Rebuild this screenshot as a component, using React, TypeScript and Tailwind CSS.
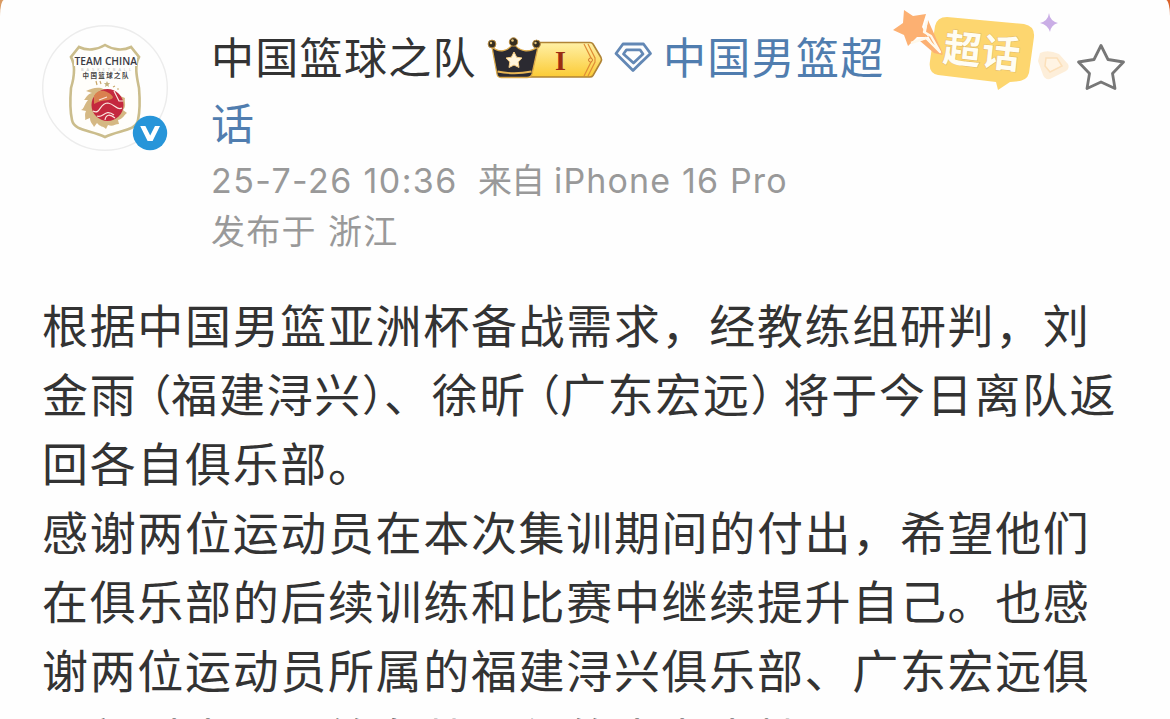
import clsx from "clsx";

const blockLines = [
    "回各自俱乐部。",
    "感谢两位运动员在本次集训期间的付出，希望他们",
    "在俱乐部的后续训练和比赛中继续提升自己。也感",
    "谢两位运动员所属的福建浔兴俱乐部、广东宏远俱",
    "乐部对中国男篮备战工作的大力支持",
];

function Avatar() {
    return (
        <div className="relative size-[126px] shrink-0">
            <svg viewBox="42 25 126 126" className="size-full">
                <circle cx="105" cy="88" r="62.3" fill="#fefefe" stroke="#ececec" strokeWidth="1.4" />
                <path
                    d="M79 47 C87 51 97 50 105 45 C113 50 123 51 131 47 L139 57 C134 66 137 78 139 88 C140 100 140 111 138 120 C136 131 119 130 105 137 C91 130 74 131 72 120 C70 111 70 100 71 88 C74 78 76 66 71 57 Z"
                    fill="#fffefb"
                    stroke="#cbbd8c"
                    strokeWidth="2.6"
                />
                <rect x="74" y="57" width="63" height="9" fill="#fefefe" />
                <text x="74.5" y="65" textLength="62.5" lengthAdjust="spacingAndGlyphs" className="font-['Open_Sans'] text-[11px] font-semibold" fill="#3a3a42">TEAM CHINA</text>
                <text x="81" y="70.5" textLength="50" className="font-['Open_Sans'] text-[4px]" fill="#bdbdbd">BASKETBALL</text>
                <text x="82.5" y="78" textLength="46" className="font-['Noto_Sans_CJK_SC'] text-[6.5px] font-bold" fill="#444">中国篮球之队</text>
                <path d="M107 81 l.9 2 2.2 .2 -1.7 1.5 .6 2.2 -2 -1.2 -2 1.2 .6 -2.2 -1.7 -1.5 2.2 -.2Z" fill="#c4b27e" />
                <path d="M113 87 l2 -1 M117 89 l2 0 M97 85 l-1 -4 M101 84 l-1 -3" stroke="#c9a76a" strokeWidth="1.2" />
                <path
                    d="M101 88 C95 87 91 89 86 91 L92 93 C87 94 86 98 84 100 L88 100 C84 105 84 109 81 110 L86 111 C84 115 86 118 85 120 L90 118 C90 123 93 124 94 127 L97 123 C100 127 103 126 106 129 L108 125 C113 127 115 124 119 124 L118 120 C123 119 124 115 127 113 L123 110 C127 106 124 102 125 98 L120 96 Z"
                    fill="#d5b883"
                />
                <circle cx="107.5" cy="105" r="16" fill="#c4283e" />
                <path d="M94 96 C98 88 108 90 113 97 C112 102 104 98 94 104 Z" fill="#d9804f" />
                <path d="M93 111 C101 115 99 103 108 103 C115 104 117 111 122 108 M97 116 C103 119 105 108 114 115 M114 91 L119 101 L123 101 M105 120 C106 114 110 114 115 118 M99 100 L107 97" fill="none" stroke="#fae7df" strokeWidth="1.2" />
            </svg>
            <svg viewBox="0 0 36 36" className="absolute left-[90px] top-[90px] size-9">
                <circle cx="18" cy="18" r="17.2" fill="#2795d9" />
                <path d="M8.2 11 h5.2 l4.8 9.6 4.8 -9.6 h5 l-7.4 15 h-5Z" fill="#fff" />
            </svg>
        </div>
    );
}

function VipBadge() {
    return (
        <svg viewBox="486 35 118 46" className="h-[46px] w-[118px] shrink-0">
            <defs>
                <linearGradient id="gold" x1="0" y1="0" x2="0" y2="1">
                    <stop offset="0" stopColor="#fff0a6" />
                    <stop offset="1" stopColor="#fbcb35" />
                </linearGradient>
            </defs>
            <path d="M537 41.5 H590 Q592 41.5 593 43 L601 56.5 Q602 58.5 601 60.5 L593 74.5 Q592 76 590 76 H530Z" fill="url(#gold)" stroke="#b08436" strokeWidth="1.6" />
            <path d="M584 43 L591 57 L591 61 L584 75 M588 43 L595 57 L595 61 L588 75" fill="none" stroke="#df8d36" strokeWidth="1.2" />
            <circle cx="590.5" cy="59" r="2" fill="#fbd96b" stroke="#d47831" />
            <path d="M492 46 C499 52 508 51 513.5 42 C519 51 529 52 538 46 L532 73 Q531 76.5 527 76.5 H501 Q497.5 76.5 497 73 Z" fill="#2b2a31" stroke="#dba948" strokeWidth="1.3" />
            <path d="M497.5 70.5 Q514 74 531.5 70.5" fill="none" stroke="#e8b654" strokeWidth="1.8" />
            <circle cx="492" cy="43" r="3.9" fill="#352d20" stroke="#b88b3e" />
            <circle cx="513.5" cy="41" r="4.2" fill="#352d20" stroke="#b88b3e" />
            <circle cx="536.5" cy="43" r="3.9" fill="#352d20" stroke="#b88b3e" />
            <circle cx="491" cy="42" r="1.2" fill="#e8c67a" />
            <circle cx="512.5" cy="39.5" r="1.3" fill="#e8c67a" />
            <circle cx="535.5" cy="42" r="1.2" fill="#e8c67a" />
            <path d="M514 51 L516.6 56.2 L522 57 L518.2 61 L519 66.5 L514 64 L509 66.5 L509.8 61 L506 57 L511.4 56.2 Z" fill="#fff5dd" stroke="#f6cd83" strokeWidth="1" strokeLinejoin="round" />
            <text x="561" y="68.5" textAnchor="middle" className="font-['Liberation_Serif'] text-[28px] font-bold" fill="#9b2d12">I</text>
        </svg>
    );
}

function Diamond() {
    return (
        <svg viewBox="614 40 40 32" className="h-8 w-10 shrink-0" fill="none" stroke="#6388b5" strokeWidth="2.8" strokeLinejoin="round">
            <path d="M637 65.5 L650.5 52.5 L643.5 43 H623 L616 52.5 L633 69.5 L642 60.5" />
            <path d="M626.5 48.8 H640 L643 53 L633.5 62 L623.5 53 Z" />
        </svg>
    );
}

function TopicSticker() {
    return (
        <svg viewBox="890 8 240 88" className="absolute left-[890px] top-2 h-[88px] w-[240px]">
            <path d="M947 17 L1024 24 Q1035 26 1034 37 L1029 73 Q1027 81 1016 81.5 L1010 82 L998 90 L996 82 L938 75 Q928 73 930 61 L935 26 Q937 17 947 17Z" fill="#fdd66f" />
            <path d="M904 10 L913 16 L926 14 L922 27 L928 37 L917 37 L908 46 L904 35 L893 30 L903 23 Z" fill="#fcb072" />
            <path d="M928 20 L943 54 L936 50 L926 32 Z" fill="#fbb071" />
            <path d="M920 41 L926 39 L943 55 L934 53 Z" fill="#fcb072" />
            <path d="M927 21 L924 32 L931 36 L940 52 L926 38 L911 43" fill="none" stroke="#fff9ec" strokeWidth="2.4" strokeLinejoin="round" />
            <g transform="translate(942 61) rotate(6)">
                <text x="0" y="0" textLength="77" className="font-['Noto_Sans_CJK_SC'] text-[38px] font-bold" fill="#fffdf3" stroke="#dfb866" strokeWidth="1" paintOrder="stroke">超话</text>
            </g>
            <path d="M1049 13 Q1050 21 1058 23 Q1051 25 1050 32 Q1048 25 1040 23 Q1048 21 1049 13Z" fill="#caaee6" />
            <path d="M1040 53 Q1048 49 1059 54 L1068 64 Q1070 68 1066 71 L1050 79 Q1045 80 1043 75 L1038 61Z" fill="#fdeed9" />
            <path d="M1046 58 L1057 58 L1062 66 L1050 72 L1045 66Z" fill="#fff4e4" stroke="#fce0ba" strokeWidth="1.5" />
            <path d="M1101 45.5 L1108 59.5 L1123.5 62 L1112.5 73.5 L1115 88.5 L1101 82 L1087 88.5 L1089.5 73.5 L1078.5 62 L1094 59.5 Z" fill="none" stroke="#777" strokeWidth="2.8" strokeLinejoin="round" />
        </svg>
    );
}

function Paren({ children, open, className }: { children: string; open?: boolean; className: string }) {
    return (
        <span className={clsx("flex text-[43px] tracking-normal", open ? "justify-end" : "justify-start", className)}>
            <span className="[font-feature-settings:'halt']">{children}</span>
        </span>
    );
}

export default function App() {
    return (
        <div className="h-[719px] w-[1170px] overflow-hidden bg-[linear-gradient(90deg,#d99a62,#d9622b)] font-['Noto_Sans_CJK_SC',sans-serif]" lang="zh-CN">
            <main className="relative h-full overflow-hidden rounded-t-[4px_16px] bg-[#fefefe]">
                <header className="flex h-[289px] pl-[42px] pt-[25px]">
                    <Avatar />
                    <div className="ml-[43px] flex flex-col">
                        <div className="mt-px flex h-[66px] items-center whitespace-nowrap text-[43px] tracking-[1.3px] text-[#333]">
                            <h1 className="-mt-2 w-[275px]">中国篮球之队</h1>
                            <VipBadge />
                            <span className="-mt-1 ml-[10px] mr-[9px] flex"><Diamond /></span>
                            <a className="-mt-2 text-[#507daf]">中国男篮超</a>
                        </div>
                        <a className="-mt-[4px] flex h-[66px] items-center text-[43px] text-[#507daf]">话</a>
                        <div className="mt-[2px] flex h-[48px] items-center whitespace-nowrap text-[34px] text-[#999]">
                            <span className="w-[267px] font-['Inter'] tracking-[1.4px]">25-7-26 10:36</span>
                            <span className="-mt-1 w-[76px] tracking-[-1px]">来自</span>
                            <span className="font-['Inter'] tracking-[1.15px]">iPhone 16 Pro</span>
                        </div>
                        <p className="-mt-[2px] flex h-[54px] items-center gap-[11px] text-[34px] tracking-[1.3px] text-[#999]">
                            <span>发布于</span>
                            <span>浙江</span>
                        </p>
                    </div>
                </header>
                <TopicSticker />
                <article className="whitespace-nowrap pl-[42px] text-[46px] leading-[69px] tracking-[1.66px] text-[#333]">
                    <p>根据中国男篮亚洲杯备战需求，经教练组研判，刘</p>
                    <div className="flex">
                        <span>金雨</span>
                        <Paren open className="w-[34px]">（</Paren>
                        <span>福建浔兴</span>
                        <Paren className="w-[22px]">）</Paren>
                        <span>、徐昕</span>
                        <Paren open className="w-[33px]">（</Paren>
                        <span>广东宏远</span>
                        <Paren className="w-[33px]">）</Paren>
                        <span>将于今日离队返</span>
                    </div>
                    {blockLines.map((line) => (
                        <p key={line}>{line}</p>
                    ))}
                </article>
            </main>
        </div>
    );
}
